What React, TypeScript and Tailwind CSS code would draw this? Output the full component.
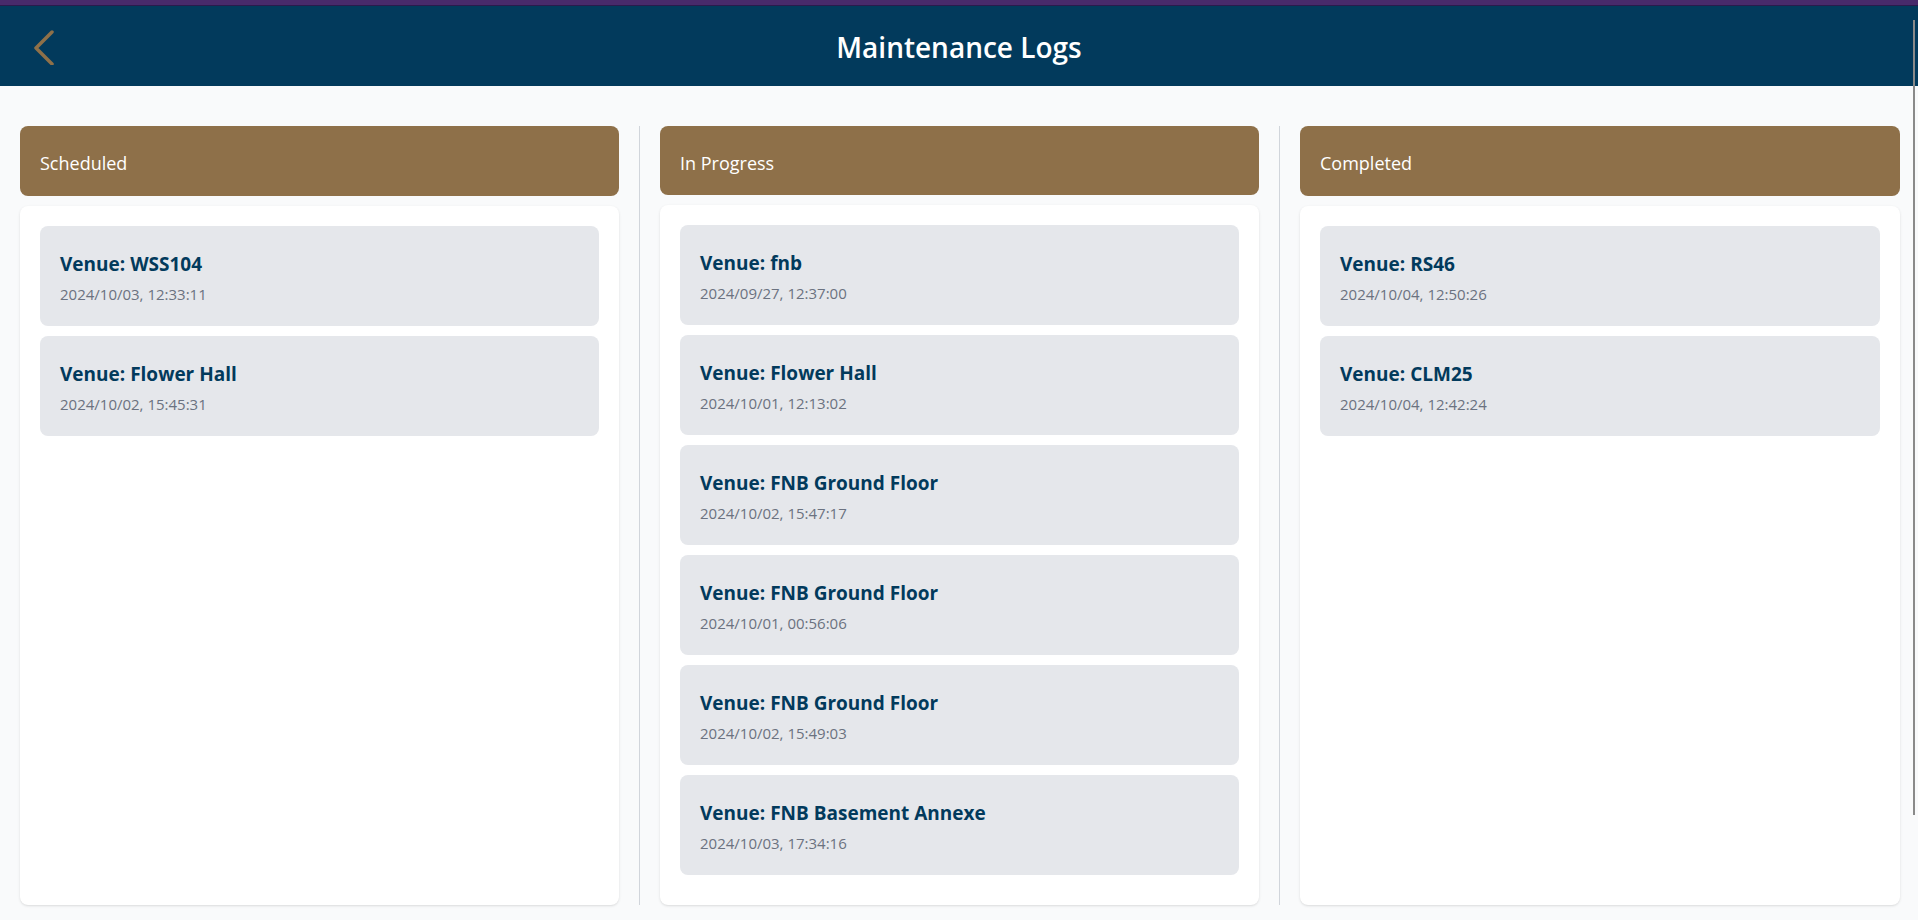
import React from "react";

type Log = { venue: string; time: string };

const columns: { title: string; logs: Log[] }[] = [
  {
    title: "Scheduled",
    logs: [
      { venue: "WSS104", time: "2024/10/03, 12:33:11" },
      { venue: "Flower Hall", time: "2024/10/02, 15:45:31" },
    ],
  },
  {
    title: "In Progress",
    logs: [
      { venue: "fnb", time: "2024/09/27, 12:37:00" },
      { venue: "Flower Hall", time: "2024/10/01, 12:13:02" },
      { venue: "FNB Ground Floor", time: "2024/10/02, 15:47:17" },
      { venue: "FNB Ground Floor", time: "2024/10/01, 00:56:06" },
      { venue: "FNB Ground Floor", time: "2024/10/02, 15:49:03" },
      { venue: "FNB Basement Annexe", time: "2024/10/03, 17:34:16" },
    ],
  },
  {
    title: "Completed",
    logs: [
      { venue: "RS46", time: "2024/10/04, 12:50:26" },
      { venue: "CLM25", time: "2024/10/04, 12:42:24" },
    ],
  },
];

export default function App() {
  return (
    <div
      className="relative h-[920px] w-full overflow-hidden bg-[#f9fafb]"
      style={{ fontFamily: '"Open Sans", "Noto Sans", sans-serif' }}
    >
      <div className="h-[5px] bg-[#482a6b]" />
      <div className="h-[1px] bg-[#2a1b4d]" />
      <header className="grid h-[80px] grid-cols-[1fr_auto_1fr] items-center bg-[#023a5c]">
        <div className="flex items-center pl-[33px]">
          <svg width="24" height="38" viewBox="0 0 24 38" fill="none">
            <polyline
              points="19,5 3,21 19,37"
              stroke="#8e7049"
              strokeWidth="3.5"
              strokeLinecap="round"
              strokeLinejoin="round"
            />
          </svg>
        </div>
        <h1 className="pt-[2px] text-[28px] font-semibold leading-none text-white">Maintenance Logs</h1>
        <div />
      </header>

      <main className="mt-[40px] grid w-[1920px] grid-cols-3">
        {columns.map((col, i) => (
          <div
            key={col.title}
            className={`flex h-[779px] flex-col px-5 ${i < 2 ? "border-r border-[#d1d5db]" : ""}`}
          >
            <div className="flex h-[70px] items-center rounded-lg bg-[#8e7049] pl-5 pt-[5px] text-[18px] text-white">
              {col.title}
            </div>
            <div className="mt-[10px] flex-1 rounded-lg bg-white p-5 shadow-sm">
              {col.logs.map((log, j) => (
                <div key={j} className="mb-[10px] h-[100px] rounded-lg bg-[#e5e7eb] px-5 pt-[24px]">
                  <div className="text-[19px] font-bold leading-[28px] text-[#023a5c]">
                    Venue: {log.venue}
                  </div>
                  <div className="mt-[6px] text-[15px] leading-[20px] text-[#6b7280]">{log.time}</div>
                </div>
              ))}
            </div>
          </div>
        ))}
      </main>

      <div className="absolute right-[3px] top-[20px] h-[795px] w-[2px] bg-[#8a8a8a]" />
    </div>
  );
}
